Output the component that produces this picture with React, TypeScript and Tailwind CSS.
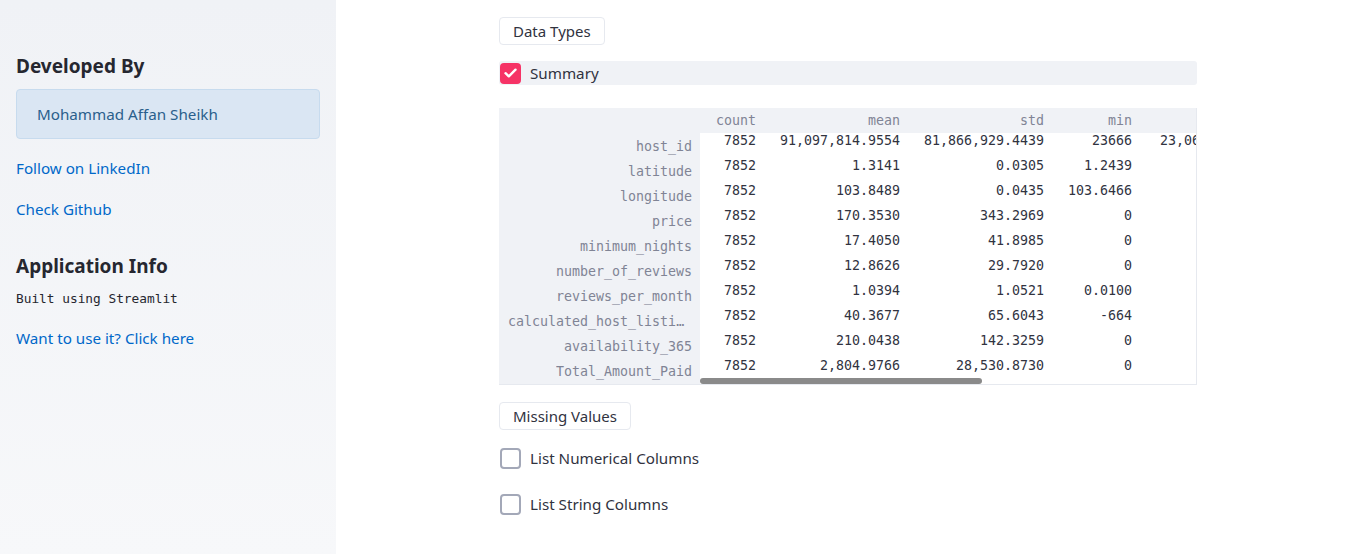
import React from "react";

const sans = { fontFamily: '"Noto Sans", "Liberation Sans", sans-serif' };
const mono = { fontFamily: '"DejaVu Sans Mono", "Liberation Mono", monospace' };

const indexLabels = [
    "host_id",
    "latitude",
    "longitude",
    "price",
    "minimum_nights",
    "number_of_reviews",
    "reviews_per_month",
    "calculated_host_listings_count",
    "availability_365",
    "Total_Amount_Paid",
];

const columns: { name: string; width: string; values: string[] }[] = [
    {
        name: "count",
        width: "w-[64px]",
        values: ["7852", "7852", "7852", "7852", "7852", "7852", "7852", "7852", "7852", "7852"],
    },
    {
        name: "mean",
        width: "w-[144px]",
        values: [
            "91,097,814.9554",
            "1.3141",
            "103.8489",
            "170.3530",
            "17.4050",
            "12.8626",
            "1.0394",
            "40.3677",
            "210.0438",
            "2,804.9766",
        ],
    },
    {
        name: "std",
        width: "w-[144px]",
        values: [
            "81,866,929.4439",
            "0.0305",
            "0.0435",
            "343.2969",
            "41.8985",
            "29.7920",
            "1.0521",
            "65.6043",
            "142.3259",
            "28,530.8730",
        ],
    },
    {
        name: "min",
        width: "w-[88px]",
        values: ["23666", "1.2439", "103.6466", "0", "0", "0", "0.0100", "-664", "0", "0"],
    },
    {
        name: "25%",
        width: "w-[148px]",
        values: [
            "23,066,498.0000",
            "1.2960",
            "103.8353",
            "65.0000",
            "1.0000",
            "0.0000",
            "0.2000",
            "2.0000",
            "54.0000",
            "150.0000",
        ],
    },
];

function Checkbox({ checked, label, shaded }: { checked?: boolean; label: string; shaded?: boolean }) {
    return (
        <div className={`flex items-center h-[24px] rounded-[3px] ${shaded ? "bg-[#f0f2f6]" : ""}`}>
            <div
                className={`ml-[1px] w-[21px] h-[21px] rounded-[4px] flex items-center justify-center ${
                    checked ? "bg-[#f63366]" : "border-2 border-[#a3a8b8] bg-white"
                }`}
            >
                {checked && (
                    <svg width="13" height="10" viewBox="0 0 13 10" fill="none">
                        <path d="M1.5 5.2 L4.8 8.3 L11.5 1.7" stroke="white" strokeWidth="2.4" strokeLinecap="round" strokeLinejoin="round" />
                    </svg>
                )}
            </div>
            <span className="ml-[9px] text-[15.2px] text-[#31333f]">{label}</span>
        </div>
    );
}

function Button({ children }: { children: React.ReactNode }) {
    return (
        <button className="h-[28px] px-[13px] bg-white border border-[#e6e9ef] rounded-[4px] text-[15px] leading-[26px] text-[#31333f]">
            {children}
        </button>
    );
}

export default function App() {
    return (
        <div className="flex w-[1356px] h-[554px] bg-white overflow-hidden" style={sans}>
            <aside className="w-[336px] h-full shrink-0 bg-gradient-to-b from-[#f0f2f6] to-[#f7f8fa] px-[16px] pt-[53px]">
                <h2 className="text-[19px] leading-[26px] font-bold text-[#262730]">Developed By</h2>
                <div className="mt-[10px] h-[50px] rounded-[4px] bg-[#dae6f3] border border-[#c7dbee] flex items-center pl-[20px]">
                    <span className="text-[15.2px] text-[#2a5f8c]">Mohammad Affan Sheikh</span>
                </div>
                <p className="mt-[17px] text-[15.2px] leading-[24px] text-[#0068c9]">Follow on LinkedIn</p>
                <p className="mt-[17px] text-[15.2px] leading-[24px] text-[#0068c9]">Check Github</p>
                <h2 className="mt-[32px] text-[19px] leading-[26px] font-bold text-[#262730]">Application Info</h2>
                <p className="mt-[12px] text-[12.8px] leading-[16px] text-[#262730]" style={mono}>
                    Built using Streamlit
                </p>
                <p className="mt-[19px] text-[15.2px] leading-[24px] text-[#0068c9]">Want to use it? Click here</p>
            </aside>

            <main className="flex-1">
                <div className="ml-[163px] w-[698px] pt-[17px] flex flex-col items-start">
                    <Button>Data Types</Button>
                    <div className="w-full mt-[16px]">
                        <Checkbox checked label="Summary" shaded />
                    </div>

                    <div className="mt-[23px] w-full h-[277px] flex border-r border-b border-[#e6e9ef] bg-white overflow-hidden">
                        <div className="w-[201px] shrink-0 bg-[#f0f2f6]">
                            <div className="h-[25px]" />
                            {indexLabels.map((label) => (
                                <div
                                    key={label}
                                    className="h-[26px] -mb-[1px] pt-[2px] flex items-center justify-end pl-[9px] pr-[8px] text-[13.3px] text-[#808495] whitespace-nowrap overflow-hidden"
                                    style={mono}
                                >
                                    <span className="truncate">{label}</span>
                                </div>
                            ))}
                        </div>
                        <div className="relative flex-1 overflow-hidden">
                            <div className="flex bg-[#f0f2f6] h-[25px] pt-[1px]">
                                {columns.map((col) => (
                                    <div
                                        key={col.name}
                                        className={`${col.width} shrink-0 flex items-center justify-end pr-[8px] text-[13.3px] text-[#808495]`}
                                        style={mono}
                                    >
                                        {col.name}
                                    </div>
                                ))}
                            </div>
                            <div className="flex">
                                {columns.map((col) => (
                                    <div key={col.name} className={`${col.width} shrink-0`}>
                                        {col.values.map((v, i) => (
                                            <div
                                                key={i}
                                                className="h-[25px] pt-[1px] text-right pr-[8px] text-[13.3px] leading-[14px] text-[#31333f] whitespace-nowrap"
                                                style={mono}
                                            >
                                                {v}
                                            </div>
                                        ))}
                                    </div>
                                ))}
                            </div>
                            <div className="absolute left-0 bottom-0 w-[282px] h-[6px] rounded-full bg-[#8a8a8a]" />
                        </div>
                    </div>

                    <div className="mt-[17px]">
                        <Button>Missing Values</Button>
                    </div>
                    <div className="w-full mt-[16px]">
                        <Checkbox label="List Numerical Columns" />
                    </div>
                    <div className="w-full mt-[22px]">
                        <Checkbox label="List String Columns" />
                    </div>
                </div>
            </main>
        </div>
    );
}
